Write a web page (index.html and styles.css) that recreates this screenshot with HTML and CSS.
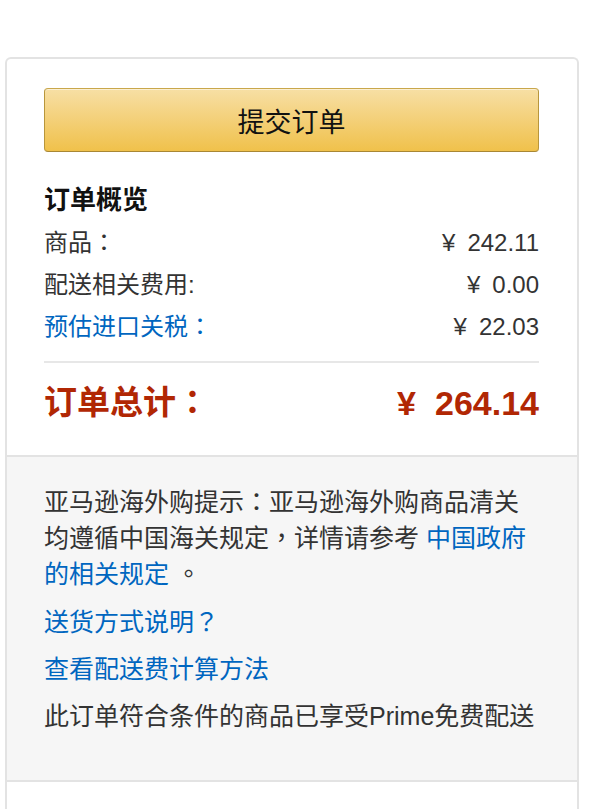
FILE: index.html
```html
<!DOCTYPE html>
<html lang="zh-CN">
<head>
<meta charset="utf-8">
<title>订单概览</title>
<link rel="stylesheet" href="styles.css">
</head>
<body>
<div class="page">
  <div class="card">
    <div class="summary">
      <button class="submit" type="button">提交订单</button>
      <h3 class="title">订单概览</h3>
      <div class="rows">
        <div class="row"><span>商品<span class="p" lang="zh-TW">：</span></span><span class="amt"><span class="yen">¥</span>242.11</span></div>
        <div class="row"><span>配送相关费用:</span><span class="amt"><span class="yen">¥</span>0.00</span></div>
        <div class="row"><a class="link" href="#">预估进口关税<span class="p" lang="zh-TW">：</span></a><span class="amt"><span class="yen">¥</span>22.03</span></div>
      </div>
      <div class="divider"></div>
      <div class="row total"><span>订单总计<span class="p" lang="zh-TW">：</span></span><span class="tamt"><span class="yen">¥</span>264.14</span></div>
    </div>
    <div class="notes">
      <p class="para">亚马逊海外购提示<span class="p" lang="zh-TW">：</span>亚马逊海外购商品清关均遵循中国海关规定<span class="p" lang="zh-TW">，</span>详情请参考 <a class="link" href="#">中国政府的相关规定</a> <span class="p" lang="zh-TW">。</span></p>
      <p class="item first"><a class="link" href="#">送货方式说明<span class="p" lang="zh-TW">？</span></a></p>
      <p class="item"><a class="link" href="#">查看配送费计算方法</a></p>
      <p class="item">此订单符合条件的商品已享受Prime免费配送</p>
    </div>
    <div class="foot"></div>
  </div>
</div>
</body>
</html>
```

FILE: styles.css
```css
html, body {
  margin: 0;
  padding: 0;
  background: #fff;
}
body {
  font-family: "Liberation Sans", "Noto Sans CJK SC", sans-serif;
  color: #333;
  font-size: 24px;
}
.p {
  font-family: "Noto Sans CJK TC", sans-serif;
  line-height: 1;
}
.page {
  padding: 57px 21px 0 5px;
}
.card {
  border: 2px solid #e3e3e3;
  border-bottom: none;
  border-radius: 6px 6px 0 0;
}
.summary {
  padding: 29px 38px 28px 37px;
  border-bottom: 2px solid #e3e3e3;
}
.submit {
  display: block;
  width: 100%;
  height: 64px;
  margin: 0;
  padding: 0;
  font-family: inherit;
  font-size: 27px;
  color: #111;
  background: linear-gradient(to bottom, #f7dfa5, #f0c14b);
  border: 1px solid;
  border-color: #c9a74b #b8963c #a88734;
  border-radius: 4px;
  box-shadow: inset 0 1px 0 rgba(255,255,255,0.5);
}
.title {
  margin: 28px 0 0;
  font-size: 26px;
  line-height: 40px;
  font-weight: bold;
  color: #111;
}
.rows {
  margin-top: 2px;
}
.row {
  display: flex;
  justify-content: space-between;
  align-items: center;
  line-height: 42px;
  height: 42px;
}
.amt {
  font-size: 24px;
}
.yen {
  margin-right: 12px;
}
.link {
  color: #0066c0;
  text-decoration: none;
}
.divider {
  margin-top: 13px;
  height: 2px;
  background: #e7e7e7;
}
.total {
  margin-top: 16px;
  height: 48px;
  line-height: 48px;
  font-size: 33px;
  font-weight: bold;
  color: #b12704;
}
.tamt {
  font-size: 34px;
}
.total .yen {
  margin-right: 19px;
}
.notes {
  background: #f6f6f6;
  padding: 27px 38px 46px 37px;
  border-bottom: 2px solid #e3e3e3;
  font-size: 25px;
}
.notes p {
  margin: 0;
}
.para {
  line-height: 36px;
}
.item {
  line-height: 36px;
}
.notes .item {
  margin-top: 11px;
}
.notes .first {
  margin-top: 12px;
}
.foot {
  height: 40px;
}
```
